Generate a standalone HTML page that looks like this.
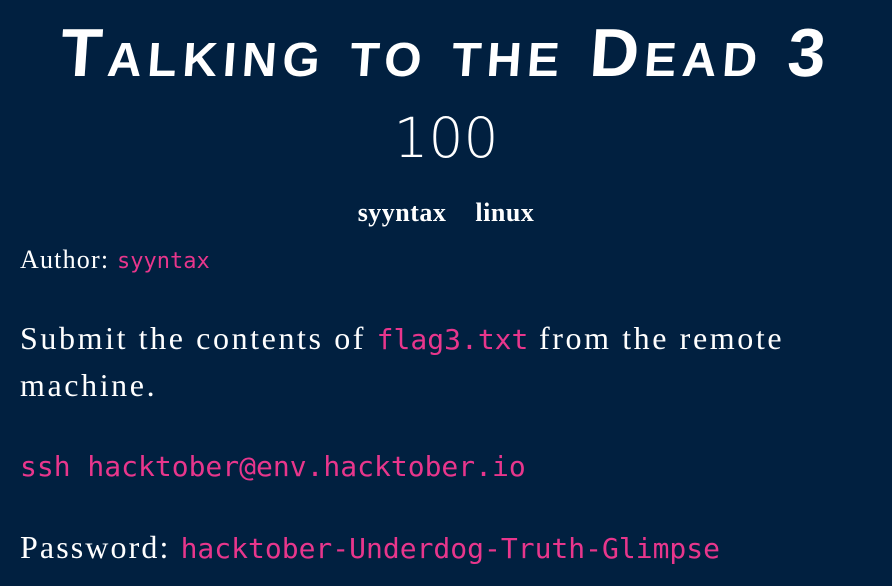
<!DOCTYPE html>
<html><head><meta charset="utf-8"><style>
html,body{margin:0;padding:0;background:#012040;width:892px;height:586px;overflow:hidden;color:#fff}
.t{position:absolute;white-space:nowrap}
.title{left:0;width:892px;text-align:center;top:14px;font:bold 68px "Liberation Sans",sans-serif;font-variant:small-caps;letter-spacing:5.7px;transform:skewX(-4deg)}
.pts{left:0;width:892px;text-align:center;top:106px;font:55px "DejaVu Sans",sans-serif;font-weight:300}
.tags{left:0;width:892px;text-align:center;top:198px;font:bold 26px "Liberation Serif",serif;letter-spacing:0.5px;word-spacing:22px}
.s{font-family:"Liberation Serif",serif;font-size:32px;letter-spacing:2.6px}
.m{font-family:"DejaVu Sans Mono",monospace;color:#e8368c;letter-spacing:0}
</style></head><body>
<div class="t title">Talking to the Dead 3</div>
<div class="t pts">100</div>
<div class="t tags">syyntax linux</div>
<div class="t s" style="left:20px;top:245px;font-size:26px;letter-spacing:1.2px">Author: <span class="m" style="font-size:22px">syyntax</span></div>
<div class="t s" style="left:20px;top:320px">Submit the contents of <span class="m" style="font-size:28px">flag3.txt</span> from the remote</div>
<div class="t s" style="left:20px;top:367px">machine.</div>
<div class="t m" style="left:20px;top:450px;font-size:28px">ssh hacktober@env.hacktober.io</div>
<div class="t s" style="left:20px;top:529px;letter-spacing:2.1px">Password: <span class="m" style="font-size:28px">hacktober-Underdog-Truth-Glimpse</span></div>
</body></html>
